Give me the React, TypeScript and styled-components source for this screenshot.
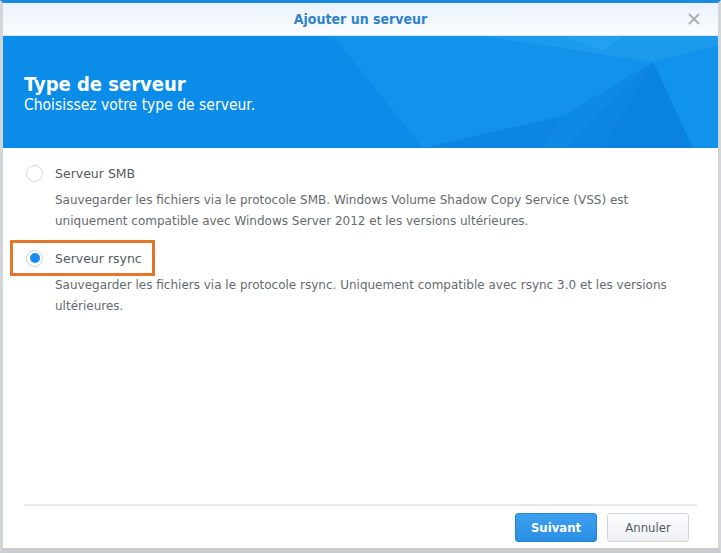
import React, { useState } from 'react'
import styled, { createGlobalStyle } from 'styled-components'

const GlobalStyle = createGlobalStyle`
  html, body {
    margin: 0;
    padding: 0;
    background: #ffffff;
  }
  #root {
    width: 721px;
    height: 553px;
  }
`

const options = [
  {
    id: 'smb',
    title: 'Serveur SMB',
    text: 'Sauvegarder les fichiers via le protocole SMB. Windows Volume Shadow Copy Service (VSS) est uniquement compatible avec Windows Server 2012 et les versions ultérieures.'
  },
  {
    id: 'rsync',
    title: 'Serveur rsync',
    text: 'Sauvegarder les fichiers via le protocole rsync. Uniquement compatible avec rsync 3.0 et les versions ultérieures.'
  }
]

const Window = styled.div`
  box-sizing: border-box;
  width: 721px;
  height: 553px;
  display: flex;
  flex-direction: column;
  background: #ffffff;
  border-top: 3px solid #1c8ae0;
  border-left: 3px solid #d3d6d9;
  border-right: 3px solid #d3d6d9;
  border-bottom: 5px solid #c9cccf;
  font-family: 'DejaVu Sans', Verdana, sans-serif;
`

const TitleBar = styled.div`
  position: relative;
  box-sizing: border-box;
  height: 33px;
  flex-shrink: 0;
  display: flex;
  align-items: center;
  justify-content: center;
  background: linear-gradient(#eaf2fb, #fbfdff);
  border-bottom: 1px solid #dce6f0;
`

const Title = styled.div`
  font-family: 'DejaVu Sans Condensed', 'DejaVu Sans', sans-serif;
  font-weight: bold;
  font-size: 14px;
  color: #2f82cc;
`

const Close = styled.button`
  position: absolute;
  right: 16px;
  top: 8px;
  width: 16px;
  height: 16px;
  padding: 0;
  border: none;
  background: none;
  display: flex;
  align-items: center;
  justify-content: center;
`

const Banner = styled.div`
  position: relative;
  box-sizing: border-box;
  overflow: hidden;
  height: 112px;
  flex-shrink: 0;
  background: #0b8ce8;
  display: flex;
  flex-direction: column;
  justify-content: center;
  padding: 2px 21px 0;
  color: #ffffff;
`

const Facets = styled.svg`
  position: absolute;
  inset: 0;
  width: 100%;
  height: 100%;
`

const BannerTitle = styled.div`
  position: relative;
  font-family: 'DejaVu Sans Condensed', 'DejaVu Sans', sans-serif;
  font-weight: bold;
  font-size: 20px;
  line-height: 24px;
`

const BannerSub = styled.div`
  position: relative;
  font-family: 'DejaVu Sans Condensed', 'DejaVu Sans', sans-serif;
  font-size: 15.5px;
  line-height: 18px;
`

const Body = styled.div`
  flex: 1;
  display: flex;
  flex-direction: column;
  gap: 17px;
  padding: 15px 23px 0;
`

const Option = styled.div`
  display: flex;
  flex-direction: column;
`

const OptionHead = styled.label<{ $marked?: boolean }>`
  position: relative;
  align-self: flex-start;
  display: flex;
  align-items: center;
  gap: 12px;
  height: 20px;
  cursor: pointer;
  font-size: 12.5px;
  color: #555a5f;

  ${({ $marked }) =>
    $marked &&
    `
    &::after {
      content: '';
      position: absolute;
      top: -8px;
      bottom: -8px;
      left: -16px;
      right: -13px;
      border: 3px solid #e2762a;
    }
  `}
`

const Radio = styled.span<{ $checked?: boolean }>`
  box-sizing: border-box;
  width: 17px;
  height: 17px;
  border-radius: 50%;
  border: 1px solid ${({ $checked }) => ($checked ? '#c5d3e0' : '#d4d7da')};
  background: #ffffff;
  display: flex;
  align-items: center;
  justify-content: center;

  &::before {
    content: '';
    width: 10px;
    height: 10px;
    border-radius: 50%;
    background: ${({ $checked }) => ($checked ? '#1a8cf0' : 'transparent')};
  }
`

const Desc = styled.div`
  margin-top: 7px;
  padding-left: 29px;
  font-size: 12px;
  line-height: 20.5px;
  color: #666b70;
  max-width: 620px;
`

const Footer = styled.div`
  box-sizing: border-box;
  flex-shrink: 0;
  margin: 0 21px;
  border-top: 2px solid #e8e8e8;
  height: 44px;
  padding: 7px 8px 0 0;
  display: flex;
  justify-content: flex-end;
  gap: 10px;
`

const Button = styled.button<{ $primary?: boolean }>`
  box-sizing: border-box;
  width: 82px;
  height: 29px;
  border-radius: 3px;
  font-family: 'DejaVu Sans Condensed', 'DejaVu Sans', sans-serif;
  font-size: 13px;
  font-weight: ${({ $primary }) => ($primary ? 'bold' : 'normal')};
  color: ${({ $primary }) => ($primary ? '#ffffff' : '#555a5f')};
  background: ${({ $primary }) =>
    $primary ? 'linear-gradient(#3da0ee, #2a8fe4)' : 'linear-gradient(#fbfcfd, #eef1f4)'};
  border: 1px solid ${({ $primary }) => ($primary ? '#2486da' : '#d2d6da')};
`

export default function App() {
  const [selected, setSelected] = useState('rsync')

  return (
    <>
      <GlobalStyle />
      <Window>
        <TitleBar>
          <Title>Ajouter un serveur</Title>
          <Close>
            <svg width="12" height="12" viewBox="0 0 12 12">
              <path d="M1 1L11 11M11 1L1 11" stroke="#a9adb1" strokeWidth="1.8" />
            </svg>
          </Close>
        </TitleBar>
        <Banner>
          <Facets viewBox="0 0 715 112" preserveAspectRatio="none">
            <polygon points="330,0 715,0 715,10 650,26 560,112 420,112" fill="#1b9aee" opacity="0.45" />
            <polygon points="480,0 715,0 715,10 650,26" fill="#2aa6f2" opacity="0.45" />
            <polygon points="650,26 715,10 715,112 690,112" fill="#1596ec" opacity="0.7" />
            <polygon points="650,26 690,112 600,112" fill="#0a7fdc" opacity="0.8" />
            <polygon points="650,26 600,112 540,112 560,80" fill="#0c84e0" opacity="0.6" />
            <polygon points="420,112 560,80 540,112" fill="#0b80de" opacity="0.7" />
            <polygon points="560,0 620,0 600,14" fill="#34acf4" opacity="0.3" />
          </Facets>
          <BannerTitle>Type de serveur</BannerTitle>
          <BannerSub>Choisissez votre type de serveur.</BannerSub>
        </Banner>
        <Body>
          {options.map(opt => (
            <Option key={opt.id}>
              <OptionHead $marked={opt.id === 'rsync'} onClick={() => setSelected(opt.id)}>
                <Radio $checked={selected === opt.id} />
                {opt.title}
              </OptionHead>
              <Desc>{opt.text}</Desc>
            </Option>
          ))}
        </Body>
        <Footer>
          <Button $primary>Suivant</Button>
          <Button>Annuler</Button>
        </Footer>
      </Window>
    </>
  )
}
